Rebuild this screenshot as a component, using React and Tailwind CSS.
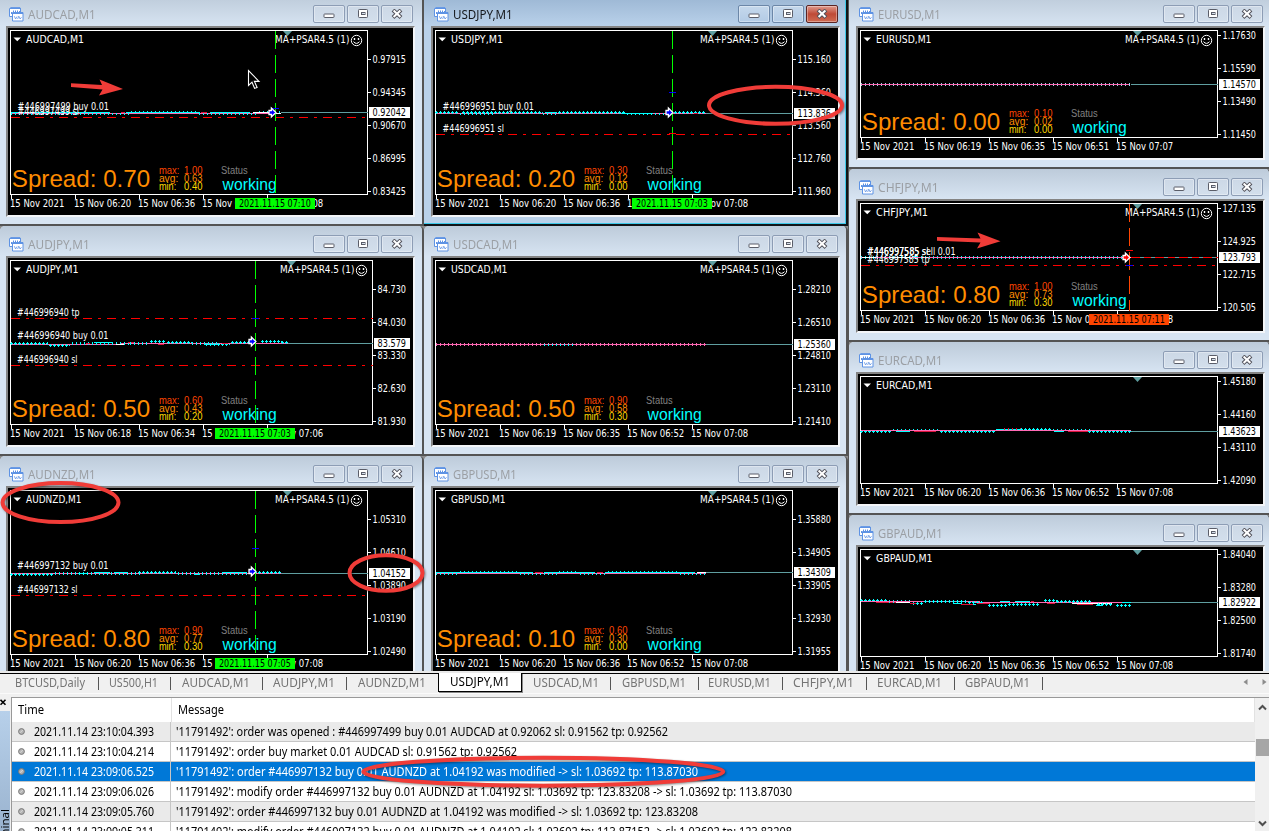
import React, { useLayoutEffect, useRef, useState } from "react";

const C = "#00ffff";
const P = "#ff69b4";
const R = "#dc143c";
const W = "#ffffff";
const UI = "'Noto Sans', 'Open Sans', sans-serif";
const TAHOMA = "'DejaVu Sans Condensed', 'Noto Sans', sans-serif";

/* Series segments: [kind, x0, x1, y, colour]; kinds: l line, d dots, t tall ticks, p pluses */
const columns = [
  [
    {
      sym: "AUDCAD", titleW: 67, symW: 57.5, ea: true,
      axis: ["0.97915", "0.94345", "0.90670", "0.86995", "0.83425"],
      price: "0.92042", py: 112.5, end: 281,
      times: ["2021", "06:20", "06:36", "06:52", "07:08"],
      mark: { x: 275.5, box: 235, text: "2021.11.15 07:10", color: "#00ff00" },
      levels: [117.5],
      orders: [["#446997499 buy 0.01", 18, 110, 91], ["#446997499 sl", 18, 115, 61]],
      stats: ["0.70", "1.00", "0.63", "0.40"],
      entry: { x: 272, y: 112.5, color: "#0000ff", ticks: [[108.5, "#0000ff"]] },
      series: [["l", 11, 272, 113.5, P], ["d", 11, 76, 114, C], ["d", 76, 130, 114, C], ["d", 131, 197, 112, C], ["d", 199, 256, 114, C], ["d", 259, 280, 112, C], ["l", 11, 110, 112.5, C], ["l", 121, 125, 112.5, R], ["l", 126, 200, 112.5, C], ["l", 201, 207, 112.5, R], ["l", 210, 250, 112.5, C], ["l", 253, 272, 112.5, W], ["l", 276, 281, 113.5, W]],
    },
    {
      sym: "AUDJPY", titleW: 61, symW: 52, ea: true, dx: 5,
      axis: ["84.730", "84.030", "83.330", "82.630", "81.930"],
      price: "83.579", py: 113.5, end: 288,
      times: ["2021", "06:18", "06:34", "06:50", "07:06"],
      mark: { x: 255.5, box: 215, text: "2021.11.15 07:03", color: "#00ff00" },
      levels: [88.5, 135.5],
      orders: [["#446996940 tp", 17.5, 86, 62], ["#446996940 buy 0.01", 17.5, 109, 91], ["#446996940 sl", 17.5, 133, 60]],
      stats: ["0.50", "0.60", "0.43", "0.20"],
      entry: { x: 252, y: 111.5, color: "#0000ff", ticks: [[88.5, "#0000ff"]] },
      series: [["l", 11, 125, 114.5, P], ["l", 121, 206, 113.5, P], ["l", 200, 288, 113.5, P], ["p", 11, 48, 113.5, C], ["p", 50, 70, 115.5, C], ["t", 72, 130, 113.5, C], ["l", 86, 90, 113.5, R], ["l", 94, 112, 112.5, C], ["l", 116, 124, 114.5, W], ["l", 128, 134, 112.5, R], ["t", 130, 150, 113.5, C], ["p", 151, 166, 111.5, C], ["p", 168, 192, 112.5, C], ["l", 158, 164, 114.5, R], ["t", 192, 220, 113.5, C], ["p", 206, 230, 114.5, C], ["l", 222, 228, 113.5, R], ["p", 232, 254, 112.5, C], ["p", 262, 282, 111.5, C], ["p", 282, 289, 112.5, C]],
    },
    {
      sym: "AUDNZD", titleW: 67, symW: 55, ea: true,
      axis: ["1.05310", "1.04610", "1.03890", "1.03190", "1.02490"],
      price: "1.04152", py: 113.5, end: 281,
      times: ["2021", "06:20", "06:36", "06:52", "07:08"],
      mark: { x: 255.5, box: 215, text: "2021.11.15 07:05", color: "#00ff00" },
      levels: [135.5],
      orders: [["#446997132 buy 0.01", 17.5, 109, 91], ["#446997132 sl", 17.5, 133, 60]],
      stats: ["0.80", "0.90", "0.77", "0.30"],
      entry: { x: 252, y: 111.5, color: "#0000ff", ticks: [[88.5, "#0000ff"]] },
      series: [["l", 11, 281, 113.5, P], ["p", 11, 54, 114.5, C], ["t", 55, 140, 113.5, C], ["l", 78, 88, 113.5, C], ["l", 94, 110, 112.5, C], ["l", 114, 128, 112.5, C], ["p", 139, 176, 112.5, C], ["t", 178, 222, 113.5, C], ["l", 194, 200, 114.5, C], ["l", 222, 246, 112.5, C], ["t", 222, 250, 113.5, C], ["p", 255, 281, 112.5, C]],
    },
  ],
  [
    {
      sym: "USDJPY", titleW: 59, symW: 51.5, ea: true, active: true,
      axis: ["115.160", "114.360", "113.560", "112.760", "111.960"],
      price: "113.836", py: 113.5, end: 281,
      times: ["2021", "06:20", "06:36", "06:52", "07:08"],
      mark: { x: 247.5, box: 207, text: "2021.11.15 07:03", color: "#00ff00" },
      levels: [134.5],
      orders: [["#446996951 buy 0.01", 18, 110, 91], ["#446996951 sl", 18, 132, 61]],
      stats: ["0.20", "0.30", "0.12", "0.00"],
      entry: { x: 244, y: 112.5, color: "#0000ff", ticks: [[92.5, "#0000ff"], [133.5, "#ff0000"]] },
      series: [["l", 11, 281, 113.5, P], ["p", 11, 34, 112.5, C], ["d", 35, 70, 114, C], ["p", 38, 118, 112.5, C], ["d", 118, 132, 114, C], ["l", 120, 132, 112.5, C], ["p", 134, 200, 112.5, C], ["l", 196, 228, 113.5, C], ["d", 202, 240, 114, C], ["p", 250, 281, 112.5, C], ["l", 269, 273, 113.5, R]],
    },
    {
      sym: "USDCAD", titleW: 65, symW: 56, ea: true,
      axis: ["1.28210", "1.26510", "1.24810", "1.23110", "1.21410"],
      price: "1.25360", py: 114.5, end: 281,
      times: ["2021", "06:19", "06:35", "06:52", "07:08"],
      levels: [], orders: [], stats: ["0.50", "0.90", "0.58", "0.30"],
      series: [["t", 11, 281, 114.5, P], ["l", 11, 281, 114.5, P], ["d", 119, 151, 115, C]],
    },
    {
      sym: "GBPUSD", titleW: 63, symW: 54, ea: true,
      axis: ["1.35880", "1.34905", "1.33905", "1.32930", "1.31955"],
      price: "1.34309", py: 112.5, end: 281,
      times: ["2021", "06:20", "06:36", "06:52", "07:08"],
      levels: [], orders: [], stats: ["0.10", "0.60", "0.30", "0.00"],
      series: [["l", 11, 281, 113.5, P], ["d", 11, 34, 114, C], ["l", 11, 108, 112.5, C], ["d", 35, 94, 112, C], ["d", 95, 133, 114, C], ["l", 110, 118, 112.5, R], ["l", 119, 170, 112.5, C], ["d", 134, 153, 112, C], ["d", 155, 182, 114, C], ["l", 172, 178, 112.5, R], ["d", 183, 254, 112, C], ["l", 180, 270, 112.5, C], ["d", 255, 281, 114, C], ["l", 272, 281, 112.5, W]],
    },
  ],
  [
    {
      sym: "EURUSD", titleW: 62, symW: 55, ea: true, short: true,
      axis: ["1.17630", "1.15590", "1.13490", "1.11450"],
      price: "1.14570", py: 84.5, end: 281,
      times: ["2021", "06:19", "06:35", "06:51", "07:07"],
      levels: [], orders: [], stats: ["0.00", "0.10", "0.02", "0.00"],
      series: [["t", 11, 281, 84.5, "#9fd4e8"], ["l", 11, 279, 84.5, P]],
    },
    {
      sym: "CHFJPY", titleW: 60, symW: 51.5, ea: true, short: true,
      axis: ["127.135", "124.925", "122.715", "120.505"],
      price: "123.793", py: 84.5, end: 281, redTail: true,
      times: ["2021", "06:20", "06:36", "06:52", "07:08"],
      mark: { x: 279.5, box: 239, text: "2021.11.15 07:11", color: "#ff4500" },
      levels: [92.5],
      orders: [["#446997585 sell 0.01", 17.5, 82, 88], ["#446997585 sl", 17.5, 82, 61], ["#446997585 tp", 17.5, 90, 62]],
      stats: ["0.80", "1.00", "0.73", "0.30"],
      entry: { x: 276, y: 84.5, color: "#ff0000", ticks: [[77.5, "#ff0000"], [92.5, "#0000ff"]] },
      series: [["t", 11, 281, 84.5, C], ["l", 11, 281, 84.5, P], ["l", 12, 26, 84.5, W], ["l", 40, 60, 84.5, W], ["l", 62, 68, 83.5, C]],
    },
    {
      sym: "EURCAD", titleW: 64, symW: 56, short: true,
      axis: ["1.45180", "1.44160", "1.43110", "1.42090"],
      price: "1.43623", py: 85.5, end: 281,
      times: ["2021", "06:20", "06:36", "06:52", "07:08"],
      levels: [], orders: [],
      series: [["p", 11, 41, 85.5, C], ["d", 43, 90, 84, C], ["l", 46, 60, 85.5, C], ["l", 64, 86, 85.5, R], ["p", 91, 145, 85.5, C], ["l", 146, 170, 83.5, C], ["d", 154, 172, 83, R], ["p", 171, 202, 83.5, C], ["d", 203, 240, 84, C], ["l", 204, 214, 85.5, C], ["l", 218, 238, 85.5, R], ["p", 239, 281, 85.5, C], ["l", 11, 281, 84.5, P]],
    },
    {
      sym: "GBPAUD", titleW: 64, symW: 56, short: true,
      axis: ["1.84040", "1.83280", "1.82500", "1.81740"],
      price: "1.82922", py: 83.5, end: 281,
      times: ["2021", "06:20", "06:36", "06:52", "07:08"],
      levels: [], orders: [],
      series: [["p", 11, 38, 81.5, C], ["l", 11, 26, 82.5, C], ["l", 26, 46, 83.5, R], ["t", 39, 60, 82.5, C], ["l", 11, 130, 82.5, P], ["l", 124, 281, 83.5, P], ["l", 46, 60, 83.5, W], ["p", 63, 74, 84.5, C], ["l", 60, 66, 84.5, R], ["p", 75, 116, 82.5, C], ["l", 103, 112, 84.5, C], ["l", 111, 123, 85.5, R], ["p", 119, 134, 83.5, C], ["l", 123, 126, 85.5, C], ["l", 127, 140, 84.5, R], ["p", 139, 158, 86.5, C], ["p", 159, 190, 85.5, C], ["l", 150, 160, 82.5, C], ["l", 165, 180, 82.5, C], ["l", 181, 184, 82.5, R], ["p", 195, 207, 81.5, C], ["l", 197, 205, 84.5, R], ["p", 207, 242, 82.5, C], ["l", 222, 262, 84.5, W], ["l", 227, 243, 85.5, R], ["l", 246, 252, 86.5, C], ["p", 248, 262, 85.5, C], ["p", 267, 281, 86.5, C], ["l", 272, 281, 83.5, C]],
    },
  ],
];

const tabs = [
  ["BTCUSD,Daily", 99, 15, 70],
  ["US500,H1", 72, 10, 49],
  ["AUDCAD,M1", 92, 11, 68],
  ["AUDJPY,M1", 84, 10, 62],
  ["AUDNZD,M1", 91, 11, 68],
  ["USDJPY,M1", 84, 11, 60],
  ["USDCAD,M1", 89, 11, 66],
  ["GBPUSD,M1", 88, 11, 64],
  ["EURUSD,M1", 84, 9, 63],
  ["CHFJPY,M1", 84, 10, 61],
  ["EURCAD,M1", 88, 10, 65],
  ["GBPAUD,M1", 88, 10, 65],
];

const log = [
  ["2021.11.14 23:10:04.393", "'11791492': order was opened : #446997499 buy 0.01 AUDCAD at 0.92062 sl: 0.91562 tp: 0.92562", 492],
  ["2021.11.14 23:10:04.214", "'11791492': order buy market 0.01 AUDCAD sl: 0.91562 tp: 0.92562", 341],
  ["2021.11.14 23:09:06.525", "'11791492': order #446997132 buy 0.01 AUDNZD at 1.04192 was modified -> sl: 1.03692 tp: 113.87030", 522],
  ["2021.11.14 23:09:06.026", "'11791492': modify order #446997132 buy 0.01 AUDNZD at 1.04192 sl: 1.03692 tp: 123.83208 -> sl: 1.03692 tp: 113.87030", 616],
  ["2021.11.14 23:09:05.760", "'11791492': order #446997132 buy 0.01 AUDNZD at 1.04192 was modified -> sl: 1.03692 tp: 123.83208", 522],
  ["2021.11.14 23:09:05.311", "'11791492': modify order #446997132 buy 0.01 AUDNZD at 1.04192 sl: 1.03692 tp: 113.87152 -> sl: 1.03692 tp: 123.83208", 616],
];

/* One line of text squeezed to a fixed width */
function Fit({ w, children, className = "" }) {
  const ref = useRef(null);
  const [scale, setScale] = useState(1);
  useLayoutEffect(() => {
    const natural = ref.current.getBoundingClientRect().width / scale;
    if (natural > 0) setScale(w / natural);
  }, [w, children]);
  return (
    <span className={`block shrink-0 whitespace-nowrap ${className}`} style={{ width: w }}>
      <span ref={ref} className="inline-block origin-left" style={{ transform: `scaleX(${scale})` }}>
        {children}
      </span>
    </span>
  );
}

function T({ x, y, w, fill = "#fff", size = 10.5, font = TAHOMA, children }) {
  return (
    <text x={x - 0.4} y={y} fill={fill} fontSize={size} fontFamily={font} textLength={w + 0.4} lengthAdjust="spacingAndGlyphs">
      {children}
    </text>
  );
}

function Segment({ seg }) {
  const [kind, x0, x1, y, color] = seg;
  const base = { x1: x0, x2: x1, y1: y, y2: y, stroke: color };
  if (kind === "l") return <line {...base} />;
  if (kind === "d") return <line {...base} strokeWidth="2" strokeDasharray="1 3" />;
  if (kind === "t") return <line {...base} strokeWidth="3" strokeDasharray="1 3" />;
  return (
    <g>
      <line {...base} strokeWidth="3" strokeDasharray="1 3" />
      <line {...base} x1={x0 - 1} strokeDasharray="3 1" />
    </g>
  );
}

function Smiley({ x, y }) {
  return (
    <g fill="none" stroke="#fff" strokeWidth="1">
      <circle cx={x} cy={y} r="5.2" />
      <path d={`M${x - 3} ${y + 1.2} q3 3.4 6 0`} />
      <path d={`M${x - 2} ${y - 2.5}v2M${x + 2} ${y - 2.5}v2`} strokeWidth="1.4" />
    </g>
  );
}

function Chart({ c }) {
  const dx = c.dx || 0;
  const right = 367.5 + dx;
  const bottom = c.short ? 137.5 : 194.5;
  const firstY = c.short ? 35.5 : 59.5;
  const o = bottom - 194.5;
  const height = c.short ? 130 : 187;
  return (
    <svg className="block bg-black" width="405" height={height} viewBox={`8 28 405 ${height}`}>
      <g shapeRendering="crispEdges" fill="none">
        <rect x="10.5" y="30.5" width={right - 10.5} height={bottom - 30.5} stroke="#fff" />
        {[11.5, 75.5, 139.5, 203.5, 267.5].map((x) => (
          <line key={x} x1={x} x2={x} y1={bottom} y2={bottom + 4} stroke="#fff" />
        ))}
        {c.axis.map((a, i) => (
          <line key={a} x1={right} x2={right + 3} y1={firstY + i * 33} y2={firstY + i * 33} stroke="#fff" />
        ))}
        <line x1={c.end} x2={right} y1={c.py} y2={c.py} stroke="#5f9ea0" />
        {c.redTail && <line x1={c.end} x2={right} y1={c.py} y2={c.py} stroke="#ff0000" strokeDasharray="9 4 7 4" />}
        {c.levels.map((y) => (
          <line key={y} x1="11" x2={right} y1={y} y2={y} stroke="#ff0000" strokeDasharray="9 6 3 6" />
        ))}
        {c.series.map((s, i) => <Segment key={i} seg={s} />)}
      </g>
      <path d={`M${283 + (dx ? 4 : 0)} 31h9l-4.5 5z`} fill="#5f9ea0" />
      <path d="M13.500 37.5h7.500l-3.750 3.800z" fill="#fff" />
      <T x={26.5} y={42.6} w={c.symW} size={11}>{c.sym},M1</T>
      {c.ea && <T x={275.5 + dx} y={43.1} w={74} size={11}>MA+PSAR4.5 (1)</T>}
      {c.ea && <Smiley x={356.5 + dx} y={40.5} />}
      {c.orders.map(([text, x, y, w]) => <T key={text} x={x} y={y} w={w}>{text}</T>)}
      {c.stats && (
        <g>
          <T x={12.2} y={187.3 + o} w={138} size={24} fill="#ff8c00" font="'Liberation Sans', sans-serif">Spread: {c.stats[0]}</T>
          {[["max:", "#ff4500", 20], ["avg:", "#ff8c00", 19], ["min:", "#ffd700", 17]].map(([k, color, w], i) => (
            <g key={k}>
              <T x={159.3} y={174 + o + i * 8} w={w} size={10} fill={color} font="'Liberation Sans', sans-serif">{k}</T>
              <T x={184.4} y={174 + o + i * 8} w={18} size={10} fill={color} font="'Liberation Sans', sans-serif">{c.stats[i + 1]}</T>
            </g>
          ))}
          <T x={221.5} y={174.2 + o} w={26.2} size={10} fill="#808080" font="'Liberation Sans', sans-serif">Status</T>
          <T x={223} y={190 + o} w={53.7} size={16} fill={C} font="'Liberation Sans', sans-serif">working</T>
        </g>
      )}
      {c.mark && (
        <line x1={c.mark.x} x2={c.mark.x} y1="31" y2={bottom} stroke={c.mark.color} strokeDasharray="18 6" shapeRendering="crispEdges" />
      )}
      {c.entry && (
        <g>
          {c.entry.ticks.map(([y, color]) => (
            <line key={y} x1={c.mark.x - 3.5} x2={c.mark.x + 3.5} y1={y} y2={y} stroke={color} shapeRendering="crispEdges" />
          ))}
          <path
            d={`M${c.entry.x - 3} ${c.entry.y - 2}h2.400v-2.500l4.500 4.500l-4.500 4.500v-2.500h-2.400z`}
            fill={c.entry.color}
            stroke="#fff"
            strokeWidth="1.300"
          />
        </g>
      )}
      {c.axis.map((a, i) => (
        <T key={a} x={373 + dx} y={firstY + 3.7 + i * 33} w={33 - dx}>{a}</T>
      ))}
      <rect x={369 + dx} y={c.py - 5.5} width={41 - dx} height="11" fill="#fff" />
      <T x={373 + dx} y={c.py + 3.7} w={33 - dx} fill="#000">{c.price}</T>
      {c.times.map((t, i) => (
        <T key={t} x={10.3 + i * 64} y={bottom + 12.6} w={i ? 57 : 54}>{`15 Nov ${t}`}</T>
      ))}
      {c.mark && (
        <g>
          <rect x={c.mark.box} y={bottom + 3.5} width="80" height="11" fill={c.mark.color} />
          <T x={c.mark.box + 4.3} y={bottom + 12.6} w={71.5} fill="#000">{c.mark.text}</T>
        </g>
      )}
    </svg>
  );
}

function ChartIcon() {
  return (
    <svg className="block shrink-0" width="15" height="15" viewBox="0 0 15 15" fill="none" stroke="#5e93e4">
      <path d="M1.500 .6h9.500l.5 1v7.900H.5V1.600z" fill="#fff" />
      <path d="M1 1.500h11" />
      <path d="M2.500 7V5M4.500 6v-2.500M6.500 5.500v-2M8.500 5v-1.500M10.500 5v-1" />
      <path d="M3.500 5.500h10.500v8.500H3.500z" fill="#fff" />
      <path d="M3.500 6.500h10.500" />
      <path d="M5.300 9.200l1.300 2.800L8 9.500M8.600 12l1.200-2.800 1.300 2.800 1.400-1.800" strokeWidth="0.800" />
    </svg>
  );
}

function WinButton({ kind, active }) {
  const red = active && kind === "close";
  const look = red
    ? "border-[#5b2423] bg-linear-to-b from-[#df9a8e] via-[#bf4a37] to-[#cf6b52]"
    : active
    ? "border-[#6c87a8] bg-linear-to-b from-[#c5d8ec] to-[#b3cbe5]"
    : "border-[#8d9db5] bg-linear-to-b from-[#ccd8e6] to-[#d3dfec]";
  return (
    <div className={`flex h-[18px] w-8 items-center justify-center rounded-[2px] border ${look} shadow-[inset_0_0_0_1px_rgba(255,255,255,0.35)]`}>
      <svg className="-ml-px" width="12" height="10" viewBox="0 0 12 10" fill="none">
        {kind === "min" && <rect x="1" y="5" width="10" height="3.500" rx=".6" fill="#fff" stroke="#5a5d68" />}
        {kind === "max" && (
          <g stroke="#5a5d68">
            <rect x="1.500" y=".5" width="9" height="8" rx=".8" fill="#fff" />
            <rect x="4.500" y="3.500" width="3.500" height="2" fill="#d5dfeb" />
          </g>
        )}
        {kind === "close" && (
          <g>
            <path d="M2 1l8 7.5M10 1L2 8.5" stroke="#53535c" strokeWidth="4" />
            <path d="M2.6 1.5l6.8 6.5M9.4 1.5L2.6 8" stroke="#fff" strokeWidth="2" />
          </g>
        )}
      </svg>
    </div>
  );
}

function ChartWindow({ c, pad }) {
  const frame = c.active
    ? "bg-[#b9d1ea] border-[#101418] shadow-[inset_-1px_-1px_0_#3cc8e8]"
    : "bg-[#d7e4f2] border-[#545454]";
  const head = c.active ? "bg-linear-to-b from-[#9bb6d3] to-[#b9d1ea]" : "bg-linear-to-b from-[#bdcbda] to-[#d7e4f2]";
  return (
    <div className={`flex shrink-0 flex-col overflow-hidden rounded-t-[5px] border-r-2 border-b-2 ${c.short ? "h-[173px]" : "h-[230px]"} ${frame}`}>
      <div className={`flex h-[30px] shrink-0 ${head} ${c.active ? "mr-px" : ""} ${pad ? "pl-2.5" : "pl-[9px]"}`}>
        <div className="flex w-[304px] shrink-0 pt-[11px]">
          <ChartIcon />
          <Fit w={c.titleW + 0.7} className={`-mt-[3px] ml-1 text-[13px] leading-[20px] ${c.active ? "text-[#15181c]" : "text-[#9b9fa4]"}`}>
            {c.sym},M1
          </Fit>
        </div>
        <div className="flex gap-0.5 pt-[9px]">
          <WinButton kind="min" active={c.active} />
          <WinButton kind="max" active={c.active} />
          <WinButton kind="close" active={c.active} />
        </div>
      </div>
      <div className={`w-[409px] shrink-0 border-t-2 border-r-2 border-b-2 border-l-2 border-t-[#848484] border-l-[#848484] border-r-[#f3f5f8] border-b-[#f3f5f8] ${pad ? "ml-[7px]" : "ml-1.5"}`}>
        <Chart c={c} />
      </div>
    </div>
  );
}

function Annotations() {
  return (
    <svg className="pointer-events-none absolute inset-0" width="1269" height="831" viewBox="0 0 1269 831">
      <g fill="none" stroke="#f03c38" strokeWidth="4" className="drop-shadow-[1px_1px_1px_rgba(0,0,0,0.45)]">
        <ellipse cx="775.500" cy="105.300" rx="66.500" ry="18.500" />
        <ellipse cx="60.500" cy="502.600" rx="58" ry="19.500" />
        <ellipse cx="386" cy="573" rx="36.500" ry="17.800" />
        <ellipse cx="543.300" cy="771.700" rx="180" ry="14" />
      </g>
      <g fill="#f03c38">
        <path d="M71 83.3L102 85L99.500 79.500L123 89L99 95.500L102.500 89.500L71 87z" />
        <path d="M937 237L980.500 238.500L977.500 232.500L1000.500 241.200L977 248.500L980.500 242.500L937 240.700z" />
      </g>
      <path d="M248.500 70.500v15l3.500-3.300l2.600 6.200l2.500-1l-2.700-6h4.600z" fill="#000" stroke="#fff" strokeWidth="1.100" />
    </svg>
  );
}

export default function App() {
  return (
    <div className="relative flex h-[831px] w-[1269px] flex-col overflow-hidden bg-[#f0f0f0]" style={{ fontFamily: UI }}>
      <div className="flex h-[671px] shrink-0 items-start overflow-hidden bg-[#8d8d8d]">
        {columns.map((col, i) => (
          <div key={i} className={`-mt-1 flex shrink-0 flex-col ${i === 2 ? "w-[423px] border-l border-[#545454]" : "w-[424px]"}`}>
            {col.map((c) => <ChartWindow key={c.sym} c={c} pad={i > 0} />)}
          </div>
        ))}
      </div>

      <div className="flex h-[26px] shrink-0 flex-col">
        <div className="h-0.5 shrink-0 bg-[#e9e9e9]" />
        <div className="flex h-[19px] shrink-0 border-t border-black">
          {tabs.map(([name, w, pl, tw]) => {
            const on = name.startsWith("USDJPY");
            const last = name.startsWith("AUDNZD");
            return (
              <div
                key={name}
                className={`relative flex shrink-0 text-[13px] leading-[17px] ${on ? "-mt-px h-[19px] border border-t-0 border-black bg-white text-black shadow-[1px_1px_0_#8a8a8a]" : "text-[#747474]"}`}
                style={{ width: w, paddingLeft: pl }}
              >
                <Fit w={tw}>{name}</Fit>
                {!on && !last && <span className="absolute top-[3px] right-0 h-[13px] w-px bg-[#555]" />}
              </div>
            );
          })}
          <div className="flex flex-1 items-center justify-end gap-3.5 pr-[2px] pb-0.5">
            <svg width="5" height="6" viewBox="0 0 5 6"><path d="M4.500 0v6L.5 3z" fill="#8c8c8c" /></svg>
            <svg width="5" height="6" viewBox="0 0 5 6"><path d="M.5 0v6l4-3z" fill="#8c8c8c" /></svg>
          </div>
        </div>
        <div className="mt-px h-px shrink-0 bg-[#fafafa]" />
      </div>

      <div className="flex min-h-0 flex-1">
        <div className="flex w-[11px] shrink-0 flex-col">
          <svg className="mt-[2px] block" width="8" height="7" viewBox="0 0 8 7">
            <path d="M.5 .8l5 5M5.500 .8l-5 5" stroke="#000" strokeWidth="1.600" />
          </svg>
          <div className="mt-[5px] flex w-[10px] flex-1 flex-col justify-end overflow-hidden bg-linear-to-b from-[#b7d0ea] to-[#9ab3cf]">
            <div className="flex h-[22px] w-[10px] items-start justify-end overflow-hidden">
              <span className="mr-[-1px] rotate-180 text-[11.500px] leading-[13px] whitespace-nowrap text-black [writing-mode:vertical-rl]">Terminal</span>
            </div>
          </div>
        </div>
        <div className="flex min-w-0 flex-1 border-t border-l border-[#999] bg-white">
          <div className="flex min-w-0 flex-1 flex-col overflow-hidden">
            <div className="flex h-6 shrink-0 text-[13px] leading-[23px] text-black">
              <div className="w-[160px] shrink-0 border-r border-[#e2e2e2] pl-1.5"><Fit w={26}>Time</Fit></div>
              <div className="flex-1 border-r border-[#e2e2e2] pl-1.5"><Fit w={46}>Message</Fit></div>
            </div>
            {log.map(([time, msg, w], i) => {
              const sel = i === 2;
              return (
                <div
                  key={time}
                  className={`flex h-5 shrink-0 border-b border-[#c6c6c6] text-[12.500px] leading-[19px] ${sel ? "bg-[#0078d7] text-white" : i % 2 ? "bg-white text-black" : "bg-[#eaeaea] text-black"}`}
                >
                  <div className="flex w-[159px] shrink-0 items-center border-r border-[#c6c6c6] pl-1.5">
                    <svg className="mr-[9px] block" width="7" height="7" viewBox="0 0 7 7">
                      <circle cx="3.500" cy="3.500" r="2.900" fill="#b5b5b5" stroke="#777" />
                      <path d="M2 4.800L4.800 2" stroke="#dedede" strokeWidth=".9" />
                    </svg>
                    <Fit w={120}>{time}</Fit>
                  </div>
                  <div className="pl-[5px]"><Fit w={w}>{msg}</Fit></div>
                </div>
              );
            })}
          </div>
          <div className="flex w-[14px] shrink-0 flex-col items-end bg-[#f0f0f0]">
            <svg className="mt-[6px] mr-[2px] block" width="9" height="7" viewBox="0 0 9 7">
              <path d="M1 5.500L4.500 2L8 5.500" stroke="#505050" strokeWidth="2" fill="none" />
            </svg>
            <div className="mt-[28px] h-[17px] w-[13px] bg-[#a6a6a6]" />
            <svg className="mt-auto mr-[2px] mb-[4px] block" width="9" height="7" viewBox="0 0 9 7">
              <path d="M1 1.500L4.500 5L8 1.500" stroke="#505050" strokeWidth="2" fill="none" />
            </svg>
          </div>
        </div>
      </div>
      <Annotations />
    </div>
  );
}
